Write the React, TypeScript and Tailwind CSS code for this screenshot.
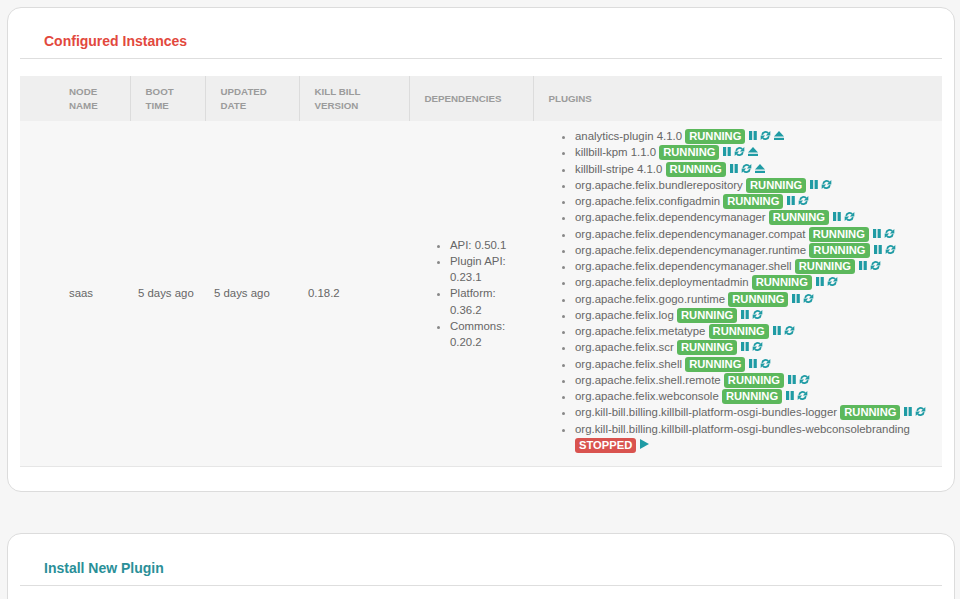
import React from "react";

type Plugin = { name: string; running: boolean; eject?: boolean };

const plugins: Plugin[] = [
  { name: "analytics-plugin 4.1.0", running: true, eject: true },
  { name: "killbill-kpm 1.1.0", running: true, eject: true },
  { name: "killbill-stripe 4.1.0", running: true, eject: true },
  { name: "org.apache.felix.bundlerepository", running: true },
  { name: "org.apache.felix.configadmin", running: true },
  { name: "org.apache.felix.dependencymanager", running: true },
  { name: "org.apache.felix.dependencymanager.compat", running: true },
  { name: "org.apache.felix.dependencymanager.runtime", running: true },
  { name: "org.apache.felix.dependencymanager.shell", running: true },
  { name: "org.apache.felix.deploymentadmin", running: true },
  { name: "org.apache.felix.gogo.runtime", running: true },
  { name: "org.apache.felix.log", running: true },
  { name: "org.apache.felix.metatype", running: true },
  { name: "org.apache.felix.scr", running: true },
  { name: "org.apache.felix.shell", running: true },
  { name: "org.apache.felix.shell.remote", running: true },
  { name: "org.apache.felix.webconsole", running: true },
  { name: "org.kill-bill.billing.killbill-platform-osgi-bundles-logger", running: true },
  { name: "org.kill-bill.billing.killbill-platform-osgi-bundles-webconsolebranding", running: false },
];

const deps = ["API: 0.50.1", "Plugin API: 0.23.1", "Platform: 0.36.2", "Commons: 0.20.2"];

const PauseIcon = () => (
  <svg width="8" height="9" viewBox="0 0 8 9" className="inline-block align-[-1px]">
    <rect x="0" y="0" width="3.2" height="9" fill="#1f9ba4" />
    <rect x="4.6" y="0" width="3.2" height="9" fill="#1f9ba4" />
  </svg>
);

const RefreshIcon = () => (
  <svg width="11" height="11" viewBox="0 0 16 16" className="inline-block align-[-1px]">
    <path d="M3.2 7.2 A5 5 0 0 1 12 4.6" stroke="#1f9ba4" strokeWidth="2.6" fill="none" />
    <path d="M15 1.5 L15 8 L8.5 8 Z" fill="#1f9ba4" />
    <path d="M12.8 8.8 A5 5 0 0 1 4 11.4" stroke="#1f9ba4" strokeWidth="2.6" fill="none" />
    <path d="M1 14.5 L1 8 L7.5 8 Z" fill="#1f9ba4" />
  </svg>
);

const EjectIcon = () => (
  <svg width="10" height="9" viewBox="0 0 10 9" className="inline-block align-[-1px]">
    <path d="M5 0 L10 5.5 L0 5.5 Z" fill="#1f9ba4" />
    <rect x="0" y="6.8" width="10" height="2.2" fill="#1f9ba4" />
  </svg>
);

const PlayIcon = () => (
  <svg width="9" height="10" viewBox="0 0 9 10" className="inline-block align-[-1px]">
    <path d="M0 0 L9 5 L0 10 Z" fill="#1f9ba4" />
  </svg>
);

const App = () => {
  return (
    <div
      className="min-h-screen bg-[#f6f6f6] pt-[7px] pb-[20px] text-[#666]"
      style={{ fontFamily: '"Liberation Sans", Arial, sans-serif' }}
    >
      {/* Configured Instances */}
      <section className="ml-[7px] w-[948px] rounded-[14px] border border-[#dcdcdc] bg-white px-[12px] pb-[24px]">
        <div className="border-b border-[#dedede] pl-[24px] pt-[24px] pb-[8px]">
          <h2 className="text-[14px] font-bold leading-[18px] text-[#e2483d]">Configured Instances</h2>
        </div>

        <table className="mt-[17px] w-[922px] table-fixed border-collapse">
          <thead>
            <tr className="h-[45px] bg-[#efefef] text-left text-[9.75px] font-bold uppercase leading-[14px] text-[#9b9b9b]">
              <th className="w-[110px] border-r border-[#dcdcdc] pl-[49px] pr-[15px] align-middle font-bold">Node Name</th>
              <th className="w-[75px] border-r border-[#dcdcdc] px-[15px] align-middle font-bold">Boot Time</th>
              <th className="w-[94px] border-r border-[#dcdcdc] px-[15px] align-middle font-bold">Updated Date</th>
              <th className="w-[110px] border-r border-[#dcdcdc] px-[15px] align-middle font-bold">Kill Bill Version</th>
              <th className="w-[124px] border-r border-[#dcdcdc] px-[15px] align-middle font-bold">Dependencies</th>
              <th className="w-[409px] px-[15px] align-middle font-bold">Plugins</th>
            </tr>
          </thead>
          <tbody>
            <tr className="border-b border-[#e6e6e6] bg-[#f7f7f7] text-[11.4px] leading-[16.25px] text-[#666]">
              <td className="pl-[49px] align-middle">saas</td>
              <td className="pl-[8px] align-middle">5 days ago</td>
              <td className="pl-[9px] align-middle">5 days ago</td>
              <td className="pl-[9px] align-middle">0.18.2</td>
              <td className="px-[15px] align-middle">
                <ul className="list-disc pl-[26px] marker:text-[#888]">
                  {deps.map((d) => (
                    <li key={d}>{d}</li>
                  ))}
                </ul>
              </td>
              <td className="px-[15px] pt-[7px] pb-[13px] align-middle">
                <ul className="list-disc pl-[27px] marker:text-[#888]">
                  {plugins.map((p) => (
                    <li key={p.name}>
                      {p.name}{" "}
                      <span
                        className={`inline-block rounded-[3px] px-[4px] text-[11.2px] font-bold leading-[15px] text-white ${
                          p.running ? "bg-[#5cb85c]" : "bg-[#d9534f]"
                        }`}
                      >
                        {p.running ? "RUNNING" : "STOPPED"}
                      </span>
                      <span className="ml-[4px] inline-flex items-center gap-[3px]">
                        {p.running ? (
                          <>
                            <PauseIcon />
                            <RefreshIcon />
                            {p.eject && <EjectIcon />}
                          </>
                        ) : (
                          <PlayIcon />
                        )}
                      </span>
                    </li>
                  ))}
                </ul>
              </td>
            </tr>
          </tbody>
        </table>
      </section>

      {/* Install New Plugin */}
      <section className="ml-[7px] mt-[41px] w-[948px] rounded-[14px] border border-[#dcdcdc] bg-white px-[12px] pb-[24px]">
        <div className="border-b border-[#dedede] pl-[24px] pt-[25px] pb-[8px]">
          <h2 className="text-[14px] font-bold leading-[18px] text-[#2a8f98]">Install New Plugin</h2>
        </div>
        <div className="h-[60px]" />
      </section>
    </div>
  );
};

export default App;
